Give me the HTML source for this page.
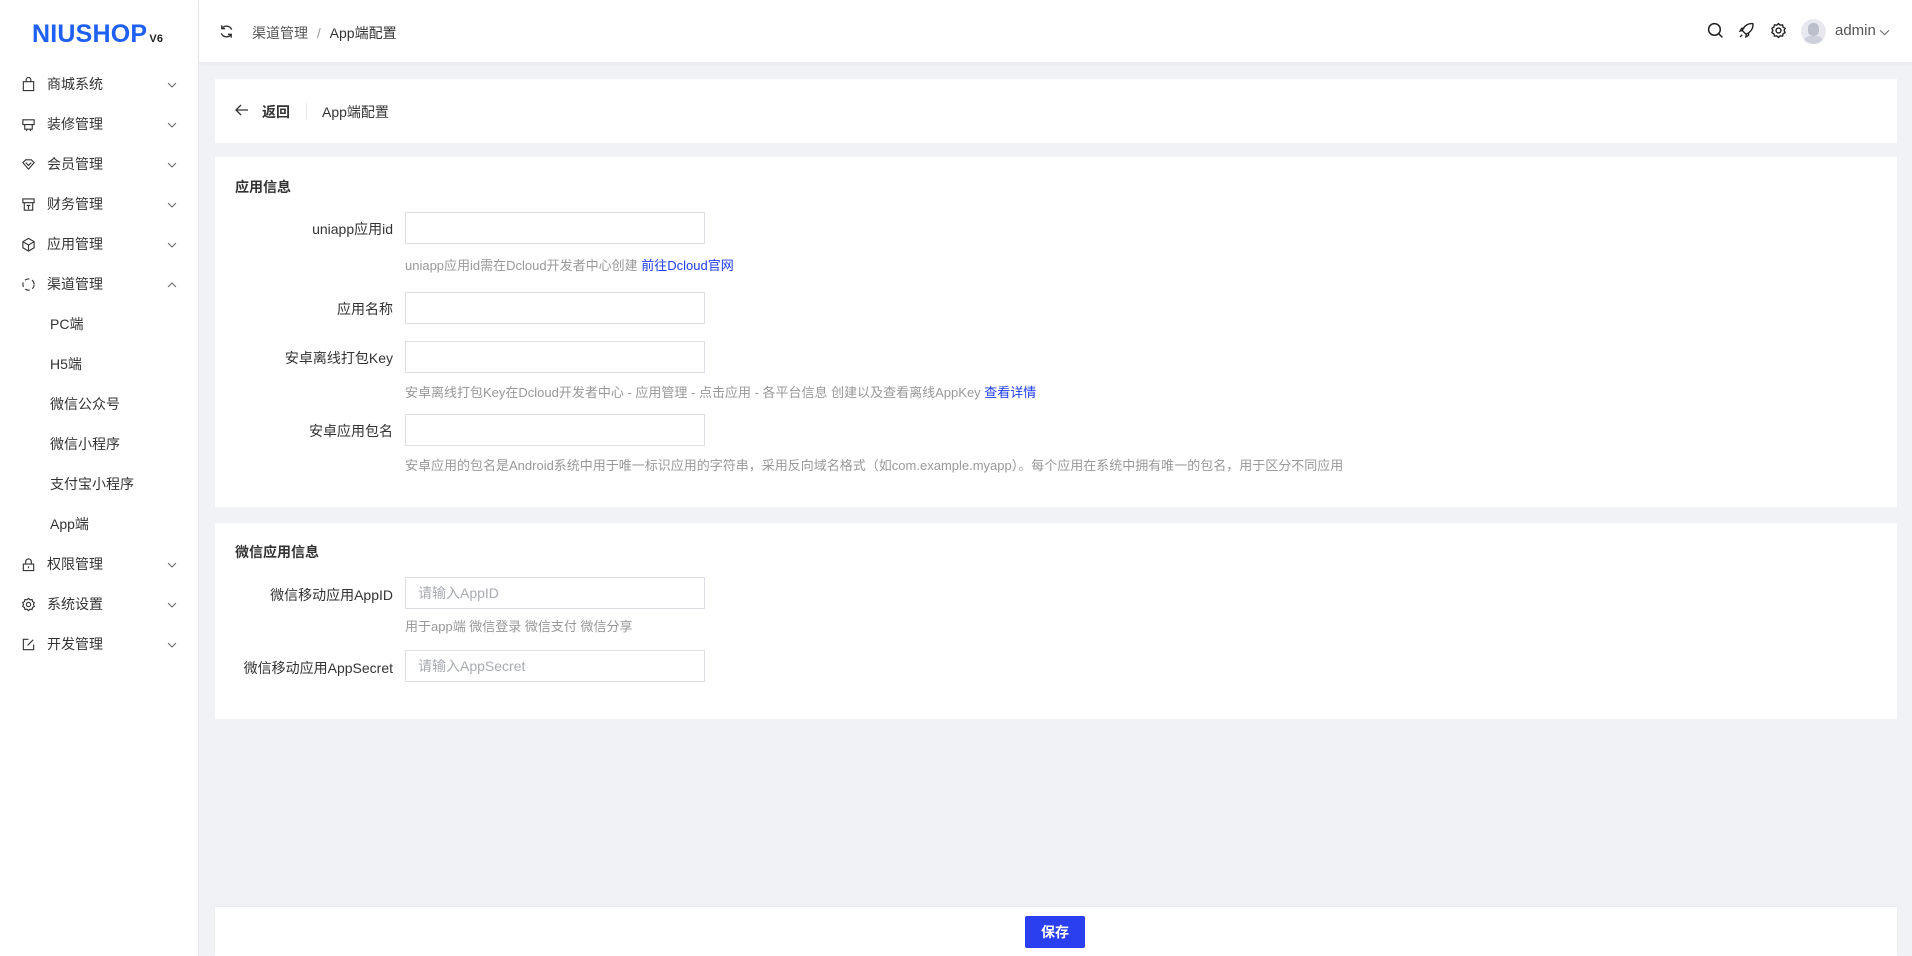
<!DOCTYPE html>
<html><head><meta charset="utf-8">
<style>
*{margin:0;padding:0;box-sizing:border-box}
body{width:1912px;height:956px;overflow:hidden;background:#f0f2f5;font-family:"Liberation Sans","Noto Sans CJK SC",sans-serif;color:#333;position:relative}
.side{position:absolute;left:0;top:0;width:199px;height:956px;background:#fff;border-right:1px solid #e8eaee}
.logo{position:absolute;left:32px;top:20px;font-weight:700;font-size:25px;color:#1e5ff5;letter-spacing:0.2px;font-family:"Liberation Sans",sans-serif}
.logo small{font-size:11px;color:#222;font-weight:700;margin-left:2px}
.mi{position:absolute;left:0;width:199px;height:40px;font-size:14px;color:#333;display:flex;align-items:center}
.mi .ic{position:absolute;left:21px;top:13px;width:15px;height:15px}
.mi .t{position:absolute;left:47px}
.mi .ch{position:absolute;left:167px;top:18px}
.sub .t{left:50px}
.head{position:absolute;left:199px;top:0;right:0;height:62px;background:#fff;box-shadow:0 1px 4px rgba(0,0,0,.06)}
.card{position:absolute;left:215px;width:1682px;background:#fff}
.lbl{position:absolute;right:1519px;font-size:14px;color:#333;text-align:right;white-space:nowrap}
.inp{position:absolute;left:405px;width:300px;height:32px;border:1px solid #dcdfe6;background:#fff;font-size:14px;color:#a8abb2;padding-left:12px;line-height:30px}
.help{position:absolute;left:405px;font-size:13px;color:#999;white-space:nowrap}
.help a{color:#1d3df0;text-decoration:none}
.tt{position:absolute;left:235px;font-size:14px;font-weight:bold;color:#333}
</style></head><body>
<div class="side">
<div class="logo">NIUSHOP<small>V6</small></div>
<div class="mi" style="top:64px"><svg class="ic" viewBox="0 0 16 16" fill="none" stroke="#333" stroke-width="1.2"><path d="M2.5 5h11v9.5h-11zM5.5 5V3a2.5 2.5 0 015 0v2"/></svg><span class="t">商城系统</span><svg class="ch" width="10" height="6" viewBox="0 0 10 6" fill="none" stroke="#666"><path d="M1 1l4 4 4-4"/></svg></div>
<div class="mi" style="top:104px"><svg class="ic" viewBox="0 0 16 16" fill="none" stroke="#333" stroke-width="1.2"><path d="M2 3h12v5H2zM4 8v5h8V8M6 13v2M10 13v2"/></svg><span class="t">装修管理</span><svg class="ch" width="10" height="6" viewBox="0 0 10 6" fill="none" stroke="#666"><path d="M1 1l4 4 4-4"/></svg></div>
<div class="mi" style="top:144px"><svg class="ic" viewBox="0 0 16 16" fill="none" stroke="#333" stroke-width="1.2"><path d="M2 6l3-3h6l3 3-6 7zM5 6l3 3 3-3"/></svg><span class="t">会员管理</span><svg class="ch" width="10" height="6" viewBox="0 0 10 6" fill="none" stroke="#666"><path d="M1 1l4 4 4-4"/></svg></div>
<div class="mi" style="top:184px"><svg class="ic" viewBox="0 0 16 16" fill="none" stroke="#333" stroke-width="1.2"><path d="M2 2h12v4H2zM3.5 6v8h9V6M6 9h4M8 9v4"/></svg><span class="t">财务管理</span><svg class="ch" width="10" height="6" viewBox="0 0 10 6" fill="none" stroke="#666"><path d="M1 1l4 4 4-4"/></svg></div>
<div class="mi" style="top:224px"><svg class="ic" viewBox="0 0 16 16" fill="none" stroke="#333" stroke-width="1.2"><path d="M8 1.5l6 3.5v6.5l-6 3.5-6-3.5V5zM2 5l6 3.5L14 5M8 8.5V15"/></svg><span class="t">应用管理</span><svg class="ch" width="10" height="6" viewBox="0 0 10 6" fill="none" stroke="#666"><path d="M1 1l4 4 4-4"/></svg></div>
<div class="mi" style="top:264px"><svg class="ic" viewBox="0 0 16 16" fill="none" stroke="#333" stroke-width="1.2"><circle cx="8" cy="8" r="6" stroke-dasharray="5 3"/></svg><span class="t">渠道管理</span><svg class="ch" width="10" height="6" viewBox="0 0 10 6" fill="none" stroke="#666"><path d="M1 5l4-4 4 4"/></svg></div>
<div class="mi sub" style="top:304px"><span class="t">PC端</span></div>
<div class="mi sub" style="top:344px"><span class="t">H5端</span></div>
<div class="mi sub" style="top:384px"><span class="t">微信公众号</span></div>
<div class="mi sub" style="top:424px"><span class="t">微信小程序</span></div>
<div class="mi sub" style="top:464px"><span class="t">支付宝小程序</span></div>
<div class="mi sub" style="top:504px"><span class="t">App端</span></div>
<div class="mi" style="top:544px"><svg class="ic" viewBox="0 0 16 16" fill="none" stroke="#333" stroke-width="1.2"><path d="M2.5 7.5h11v7h-11zM5 7.5V5a3 3 0 016 0v2.5M8 10v2"/></svg><span class="t">权限管理</span><svg class="ch" width="10" height="6" viewBox="0 0 10 6" fill="none" stroke="#666"><path d="M1 1l4 4 4-4"/></svg></div>
<div class="mi" style="top:584px"><svg class="ic" viewBox="0 0 16 16" fill="none" stroke="#333" stroke-width="1.2"><circle cx="8" cy="8" r="2.3"/><path d="M8 1.5l1.6 1.5 2.2-.3.5 2.1 1.9 1.2-.9 2 .9 2-1.9 1.2-.5 2.1-2.2-.3L8 14.5l-1.6-1.5-2.2.3-.5-2.1-1.9-1.2.9-2-.9-2 1.9-1.2.5-2.1 2.2.3z"/></svg><span class="t">系统设置</span><svg class="ch" width="10" height="6" viewBox="0 0 10 6" fill="none" stroke="#666"><path d="M1 1l4 4 4-4"/></svg></div>
<div class="mi" style="top:624px"><svg class="ic" viewBox="0 0 16 16" fill="none" stroke="#333" stroke-width="1.2"><path d="M8 2.5H2.5v11h11V8M7 9l6-6"/></svg><span class="t">开发管理</span><svg class="ch" width="10" height="6" viewBox="0 0 10 6" fill="none" stroke="#666"><path d="M1 1l4 4 4-4"/></svg></div>
</div>

<div class="head">
<svg style="position:absolute;left:20px;top:24px" width="15" height="15" viewBox="0 0 16 16" fill="none" stroke="#333" stroke-width="1.5"><path d="M13.5 6A6 6 0 003 5M2.5 10A6 6 0 0013 11M3 1.5V5h3.5M13 14.5V11H9.5"/></svg>
<div style="position:absolute;left:53px;top:23px;font-size:14px;color:#555">渠道管理 <span style="color:#999;margin:0 5px">/</span> <span style="color:#333">App端配置</span></div>
<svg style="position:absolute;left:1508px;top:22px" width="17" height="17" viewBox="0 0 16 16" fill="none" stroke="#222" stroke-width="1.4"><circle cx="7" cy="7" r="5.5"/><path d="M11 11l3.5 3.5"/></svg>
<svg style="position:absolute;left:1539px;top:22px" width="17" height="17" viewBox="0 0 16 16" fill="none" stroke="#222" stroke-width="1.3"><path d="M6 10l-2-2c2-5 6-7 10-6.5 .5 4-1.5 8-6.5 10zM5 8L2 8.5 3.5 6H6M8 11l-.5 3 2.5-1.5V10M4 12l-2 2"/></svg>
<svg style="position:absolute;left:1571px;top:22px" width="17" height="17" viewBox="0 0 16 16" fill="none" stroke="#222" stroke-width="1.3"><circle cx="8" cy="8" r="2.3"/><path d="M8 1.5l1.6 1.5 2.2-.3.5 2.1 1.9 1.2-.9 2 .9 2-1.9 1.2-.5 2.1-2.2-.3L8 14.5l-1.6-1.5-2.2.3-.5-2.1-1.9-1.2.9-2-.9-2 1.9-1.2.5-2.1 2.2.3z"/></svg>
<div style="position:absolute;left:1602px;top:19px;width:25px;height:25px;border-radius:50%;background:#e8e9ef;overflow:hidden"><div style="position:absolute;left:7px;top:4px;width:11px;height:13px;border-radius:5px;background:#bbbfcc"></div><div style="position:absolute;left:3px;top:17px;width:19px;height:12px;border-radius:8px;background:#cdd0da"></div></div>
<div style="position:absolute;left:1636px;top:22px;font-size:15px;color:#555">admin</div>
<svg style="position:absolute;left:1680px;top:29px" width="11" height="7" viewBox="0 0 10 6" fill="none" stroke="#777"><path d="M1 1l4 4 4-4"/></svg>
</div>

<div class="card" style="top:79px;height:64px">
<svg style="position:absolute;left:20px;top:25px" width="14" height="12" viewBox="0 0 14 12" fill="none" stroke="#333" stroke-width="1.3"><path d="M13 6H1M6 1L1 6l5 5"/></svg>
<div style="position:absolute;left:47px;top:23px;font-size:14px;font-weight:bold">返回</div>
<div style="position:absolute;left:91px;top:24px;width:1px;height:16px;background:#e5e5e5"></div>
<div style="position:absolute;left:107px;top:23px;font-size:14px">App端配置</div>
</div>

<div class="card" style="top:157px;height:350px"></div>
<div class="tt" style="top:177px">应用信息</div>
<div class="lbl" style="top:219px">uniapp应用id</div><div class="inp" style="top:212px"></div>
<div class="help" style="top:255px">uniapp应用id需在Dcloud开发者中心创建 <a>前往Dcloud官网</a></div>
<div class="lbl" style="top:299px">应用名称</div><div class="inp" style="top:292px"></div>
<div class="lbl" style="top:348px">安卓离线打包Key</div><div class="inp" style="top:341px"></div>
<div class="help" style="top:382px">安卓离线打包Key在Dcloud开发者中心 - 应用管理 - 点击应用 - 各平台信息 创建以及查看离线AppKey <a>查看详情</a></div>
<div class="lbl" style="top:421px">安卓应用包名</div><div class="inp" style="top:414px"></div>
<div class="help" style="top:455px">安卓应用的包名是Android系统中用于唯一标识应用的字符串，采用反向域名格式（如com.example.myapp）。每个应用在系统中拥有唯一的包名，用于区分不同应用</div>

<div class="card" style="top:523px;height:196px"></div>
<div class="tt" style="top:542px">微信应用信息</div>
<div class="lbl" style="top:585px">微信移动应用AppID</div><div class="inp" style="top:577px">请输入AppID</div>
<div class="help" style="top:616px">用于app端 微信登录 微信支付 微信分享</div>
<div class="lbl" style="top:658px">微信移动应用AppSecret</div><div class="inp" style="top:650px">请输入AppSecret</div>

<div class="card" style="top:907px;height:49px;box-shadow:0 -1px 4px rgba(0,0,0,.05)">
<div style="position:absolute;left:810px;top:9px;width:60px;height:32px;background:#2a3ff0;color:#fff;font-size:14px;font-weight:bold;text-align:center;line-height:32px;border-radius:2px">保存</div>
</div>
</body></html>
